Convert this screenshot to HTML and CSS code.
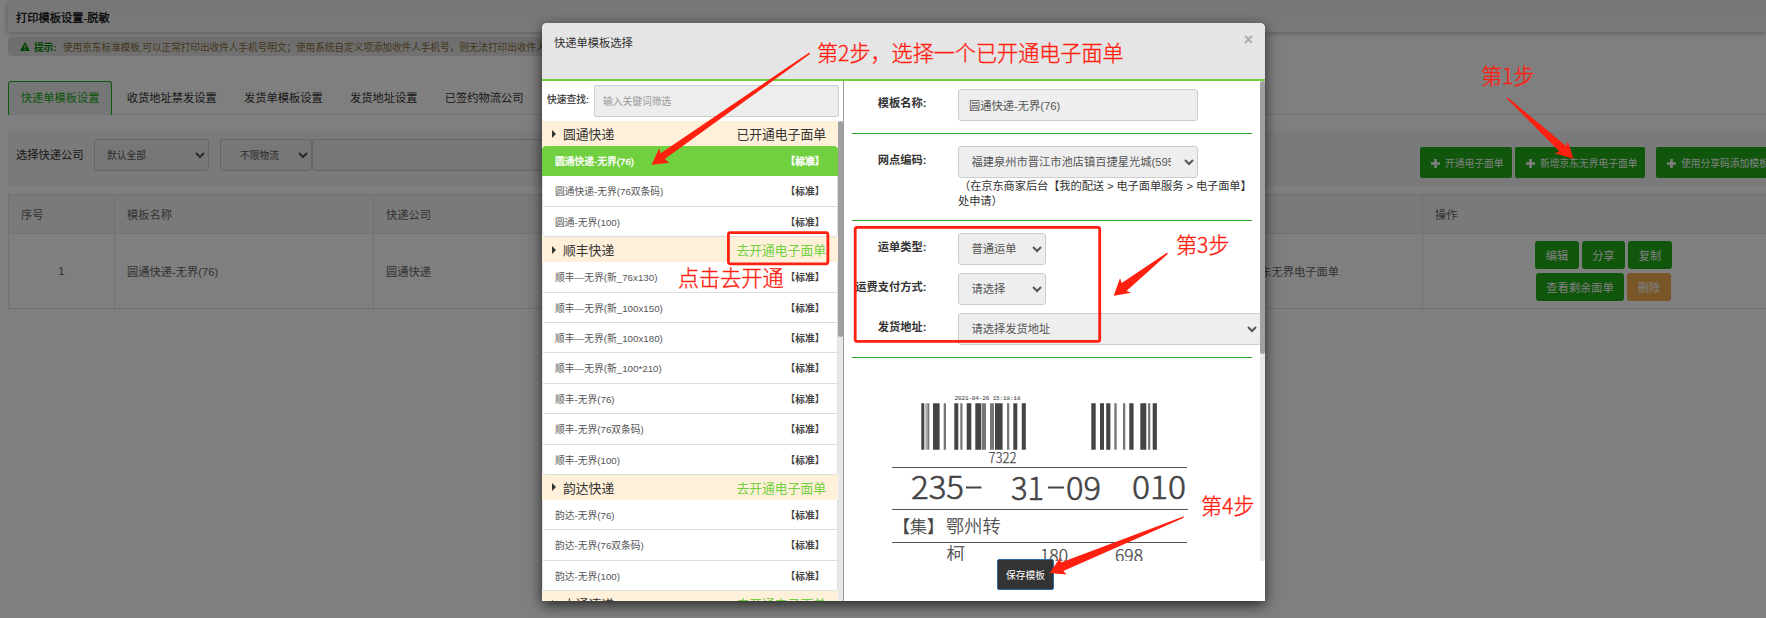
FILE: index.html
```html
<!DOCTYPE html>
<html lang="zh-CN">
<head>
    <meta charset="UTF-8">
    <title>打印模板设置</title>
    <link rel="stylesheet" href="styles.css">
</head>
<body>
    <div class="page">
        <div class="page-title">打印模板设置-脱敏</div>
        <div class="notice">
            <svg class="warn" viewBox="0 0 10 9"><path d="M5 0L10 9H0Z" fill="#080"/><path d="M4.4 3h1.2v3H4.4zM4.4 6.8h1.2v1.1H4.4z" fill="#ddd"/></svg>
            <b>提示:</b><span>使用京东标准模板,可以正常打印出收件人手机号明文；使用系统自定义项添加收件人手机号，则无法打印出收件人</span>
        </div>

        <div class="tabs">
            <div class="tab active">快递单模板设置</div>
            <div class="tab">收货地址禁发设置</div>
            <div class="tab">发货单模板设置</div>
            <div class="tab">发货地址设置</div>
            <div class="tab">已签约物流公司</div>
        </div>

        <div class="filter-bar">
            <span class="filter-label">选择快递公司</span>
            <select class="control company"><option>默认全部</option></select>
            <select class="control logistics"><option>不限物流</option></select>
            <input class="control keyword" type="text">
            <div class="actions">
                <button class="btn open"><svg viewBox="0 0 9 9"><path d="M3.2 0h2.6v3.2H9v2.6H5.8V9H3.2V5.8H0V3.2h3.2z"/></svg>开通电子面单</button>
                <button class="btn add"><svg viewBox="0 0 9 9"><path d="M3.2 0h2.6v3.2H9v2.6H5.8V9H3.2V5.8H0V3.2h3.2z"/></svg>新增京东无界电子面单</button>
                <button class="btn share"><svg viewBox="0 0 9 9"><path d="M3.2 0h2.6v3.2H9v2.6H5.8V9H3.2V5.8H0V3.2h3.2z"/></svg>使用分享码添加模板</button>
            </div>
        </div>

        <table class="templates">
            <colgroup><col class="c1"><col class="c2"><col class="c3"><col class="c4"><col class="c5"><col class="c6"></colgroup>
            <tr><th>序号</th><th>模板名称</th><th>快递公司</th><th></th><th></th><th>操作</th></tr>
            <tr>
                <td class="center">1</td>
                <td>圆通快递-无界(76)</td>
                <td>圆通快递</td>
                <td></td>
                <td>京东无界电子面单</td>
                <td class="ops">
                    <div><button class="op w44">编辑</button><button class="op w43">分享</button><button class="op w44">复制</button></div>
                    <div><button class="op w88">查看剩余面单</button><button class="op w44 del">删除</button></div>
                </td>
            </tr>
        </table>
    </div>

    <div class="backdrop"></div>

    <div class="modal">
        <div class="modal-header">
            <span>快递单模板选择</span>
            <span class="close">×</span>
        </div>
        <div class="modal-body">
            <div class="side">
                <div class="search">
                    <label>快速查找:</label>
                    <input type="text" placeholder="输入关键词筛选">
                </div>
                <div class="list-wrap">
                    <div class="list">
                        <div class="group"><i></i>圆通快递<span>已开通电子面单</span></div>
                        <div class="items">
                            <div class="item active">圆通快递-无界(76)<b>【标准】</b></div>
                            <div class="item">圆通快递-无界(76双条码)<b>【标准】</b></div>
                            <div class="item">圆通-无界(100)<b>【标准】</b></div>
                        </div>
                        <div class="group todo"><i></i>顺丰快递<span>去开通电子面单</span></div>
                        <div class="items">
                            <div class="item">顺丰—无界(新_76x130)<b>【标准】</b></div>
                            <div class="item">顺丰—无界(新_100x150)<b>【标准】</b></div>
                            <div class="item">顺丰—无界(新_100x180)<b>【标准】</b></div>
                            <div class="item">顺丰—无界(新_100*210)<b>【标准】</b></div>
                            <div class="item">顺丰-无界(76)<b>【标准】</b></div>
                            <div class="item">顺丰-无界(76双条码)<b>【标准】</b></div>
                            <div class="item">顺丰-无界(100)<b>【标准】</b></div>
                        </div>
                        <div class="group todo"><i></i>韵达快递<span>去开通电子面单</span></div>
                        <div class="items">
                            <div class="item">韵达-无界(76)<b>【标准】</b></div>
                            <div class="item">韵达-无界(76双条码)<b>【标准】</b></div>
                            <div class="item">韵达-无界(100)<b>【标准】</b></div>
                        </div>
                        <div class="group todo"><i></i>中通速递<span>去开通电子面单</span></div>
                    </div>
                    <div class="scrollbar"><div class="thumb side-thumb"></div></div>
                </div>
            </div>

            <div class="main">
                <div class="form-wrap">
                    <div class="form">
                        <div class="section s1">
                            <div class="field"><label>模板名称:</label><input class="control wide" type="text" value="圆通快递-无界(76)"></div>
                        </div>
                        <div class="section s2">
                            <div class="field">
                                <label>网点编码:</label>
                                <div>
                                    <select class="control wide"><option>福建泉州市晋江市池店镇百捷星光城(595001)</option></select>
                                    <p>（在京东商家后台【我的配送 &gt; 电子面单服务 &gt; 电子面单】<br>处申请）</p>
                                </div>
                            </div>
                        </div>
                        <div class="section s3">
                            <div class="field"><label>运单类型:</label><select class="control short"><option>普通运单</option></select></div>
                            <div class="field"><label>运费支付方式:</label><select class="control short"><option>请选择</option></select></div>
                            <div class="field"><label>发货地址:</label><select class="control full"><option>请选择发货地址</option></select></div>
                        </div>

                        <!-- waybill preview -->
                        <svg class="waybill" viewBox="892 385 300 190" width="300" height="190">
                            <text x="954.5" y="400.3" class="stamp" textLength="66">2021-04-26 15:18:18</text>
                            <g fill="#444">
                                <path d="M921.3 403.3h3v46.4h-3zM933 403.3h6.6v46.4H933zM954.3 403.3h4v46.4h-4zM966.7 403.3h4.6v46.4h-4.6zM975.3 403.3h6v46.4h-6zM995 403.3h7.6v46.4H995zM1013.3 403.3h4v46.4h-4zM1021.8 403.3h4v46.4h-4z"/>
                                <path d="M1091.3 403.3h4.4v46.4h-4.4zM1100 403.3h4v46.4h-4zM1106.2 403.3h4.2v46.4h-4.2zM1129.3 403.3h4.3v46.4h-4.3zM1140.3 403.3h6v46.4h-6zM1152.7 403.3h4.2v46.4h-4.2z"/>
                            </g>
                            <g fill="#777">
                                <path d="M925.6 403.3h1v46.4h-1zM927.3 403.3h2v46.4h-2zM943.7 403.3h2.3v46.4h-2.3zM960.3 403.3h2.2v46.4h-2.2zM982 403.3h4v46.4h-4zM990 403.3h4v46.4h-4zM1007 403.3h2.3v46.4h-2.3z"/>
                                <path d="M1114.3 403.3h2.4v46.4h-2.4zM1123 403.3h2.3v46.4H1123zM1148 403.3h2.3v46.4H1148z"/>
                            </g>
                            <text x="988.5" y="463.4" class="num" font-size="14.5" textLength="28" lengthAdjust="spacingAndGlyphs">7322</text>
                            <path d="M892 467.5h295M892 509.5h296M892 542.5h295" stroke="#555"/>
                            <g class="num big" font-size="32">
                                <text x="911" y="499.3" textLength="53" lengthAdjust="spacingAndGlyphs">235</text>
                                <text x="1011" y="499.8" textLength="33" lengthAdjust="spacingAndGlyphs">31</text>
                                <text x="1066" y="499.8" textLength="35" lengthAdjust="spacingAndGlyphs">09</text>
                                <text x="1132" y="499" textLength="54" lengthAdjust="spacingAndGlyphs">010</text>
                            </g>
                            <path d="M966 487.5h15.5M1048 487.5h16" stroke="#444" stroke-width="2"/>
                            <text x="893" y="532.5" class="num" font-size="17">【集】</text>
                            <text x="946" y="532.5" class="num" font-size="18.2">鄂州转</text>
                            <text x="946.5" y="560.5" class="num" font-size="18.5">柯</text>
                            <text x="1040" y="561.5" class="num" font-size="17" textLength="28" lengthAdjust="spacingAndGlyphs">180</text>
                            <text x="1115" y="561.5" class="num" font-size="17" textLength="28" lengthAdjust="spacingAndGlyphs">698</text>
                        </svg>
                    </div>
                    <div class="scrollbar"><div class="thumb main-thumb"></div></div>
                </div>
                <div class="modal-footer"><button class="save">保存模板</button></div>
            </div>
        </div>
    </div>

    <!-- step marks over the page -->
    <div class="marks">
        <svg viewBox="0 0 1766 618" width="1766" height="618">
            <g fill="#ff2010">
                <path d="M1506.7 98.5L1507.8 97.5L1566.3 146.3L1567.7 141L1573.3 158.7L1554.7 153.3L1559.3 151.3Z"/>
                <path d="M809.3 52.5L810 54L664.7 159L669.3 162.8L651.5 164.8L659.3 148.3L660.7 153.3Z"/>
                <path d="M1166.8 252.8L1167.9 253.8L1126.5 291L1131.3 292.7L1113.7 295.7L1120 278.3L1121.7 282.9Z"/>
                <path d="M1183.3 516.5L1183.8 517.8L1063.3 570.9L1066.7 574.5L1049.7 573L1060 557.7L1061 562.5Z"/>
            </g>
            <g fill="none" stroke="#ff2010" stroke-width="2.8">
                <rect x="728.4" y="232.6" width="99.5" height="31.2" rx="2"/>
                <rect x="855.2" y="227.4" width="244.5" height="114" rx="2"/>
            </g>
        </svg>
        <span class="mark m1">第1步</span>
        <span class="mark m2">第2步，选择一个已开通电子面单</span>
        <span class="mark m3">第3步</span>
        <span class="mark m4">第4步</span>
        <span class="mark m5">点击去开通</span>
    </div>
</body>
</html>
```
FILE: styles.css
```css
* {
    box-sizing: border-box;
}

body {
    margin: 0;
    width: 1766px;
    height: 618px;
    overflow: hidden;
    font-family: "Liberation Sans", "Noto Sans CJK SC", sans-serif;
    font-size: 11.25px;
    color: #333;
    background: #fff;
}

button, input, select {
    font-family: inherit;
    margin: 0;
}

.page {
    padding: 2px 0 0 8px;
    width: 1766px;
    height: 618px;
    overflow: hidden;
}

.page-title {
    height: 30px;
    padding: 0 8px;
    line-height: 32px;
    color: #111;
    -webkit-text-stroke: 0.3px #111;
    background: linear-gradient(#ececec, #f5f5f5);
    box-shadow: 0 1px 6px rgba(0, 0, 0, 0.3);
}

.notice {
    display: flex;
    align-items: center;
    height: 19px;
    margin-top: 5px;
    padding-left: 12px;
    border-radius: 4px;
    background: linear-gradient(#d9d9d9, #e4e4e4);
    font-size: 9.75px;
    letter-spacing: -0.15px;
    color: #8a6d3b;
    white-space: nowrap;
}

.notice b {
    width: 29px;
    color: #080;
}

/* the strip has no background behind the open dialog's right side */
.notice {
    width: 540px;
}

.warn {
    width: 10px;
    height: 9px;
    margin-right: 4px;
}

.tabs {
    display: flex;
    gap: 1.3px;
    height: 34px;
    margin-top: 25px;
    border-bottom: 1px solid #e4e4e4;
}

.tab {
    height: 34px;
    padding: 0 13px;
    line-height: 34px;
}

.tab.active {
    padding: 0 11.8px;
    line-height: 33px;
    border: 1px solid #20ac18;
    border-bottom: none;
    border-radius: 3px 3px 0 0;
    background: #ececec;
    color: #20ac18;
}

.filter-bar {
    display: flex;
    height: 55px;
    margin-top: 16px;
    padding: 8px 0 0 8px;
    background: #f4f4f4;
    font-size: 11.25px;
}

.filter-bar > * {
    flex: none;
}

.filter-label {
    width: 78px;
    line-height: 32px;
}

.control {
    height: 32px;
    border: 1px solid #ccc;
    border-radius: 3px;
    background-color: #eee;
    color: #555;
    font-size: 11.25px;
    padding: 0 10px;
    outline: none;
}

select.control {
    padding: 0 10px 0 8.5px;
}

.filter-bar .control {
    font-size: 9.75px;
}

.filter-bar .company {
    width: 115px;
    padding-left: 8px;
}

.filter-bar .logistics {
    width: 92px;
    margin-left: 11px;
    padding-left: 15px;
}

.filter-bar .keyword {
    width: 300px;
}

.actions {
    display: flex;
    margin: 8px 0 0 808px;
}

.btn {
    flex: none;
    height: 31px;
    padding: 0 0 0 11px;
    border: none;
    border-radius: 2px;
    background: #20ac18;
    color: #fff;
    font-size: 9.75px;
    text-align: left;
    white-space: nowrap;
}

.btn svg {
    width: 9px;
    height: 9px;
    margin-right: 5px;
    vertical-align: -1px;
    fill: #fff;
}

.open {
    width: 92px;
}

.add {
    width: 130px;
    margin-left: 3px;
}

.share {
    width: 130px;
    margin-left: 11px;
}

.templates {
    width: 1777px;
    margin-top: 8px;
    table-layout: fixed;
    border-collapse: collapse;
    color: #666;
}

.c1 { width: 106px; }
.c2 { width: 259px; }
.c3 { width: 156px; }
.c4 { width: 707px; }
.c5 { width: 186px; }

.templates th,
.templates td {
    padding: 0 12px;
    border: 1px solid #e4e4e4;
    text-align: left;
    font-weight: normal;
}

.templates th {
    height: 39px;
    background: #f4f4f4;
}

.templates td {
    height: 75px;
}

.templates .center {
    text-align: center;
}

.ops div {
    display: flex;
    justify-content: center;
    gap: 3px;
    margin-bottom: 4px;
}

.ops div + div {
    margin-bottom: 0;
}

.op {
    height: 28px;
    padding: 0;
    border: none;
    border-radius: 3px;
    background: #20ac18;
    color: #fff;
    font-size: 11.25px;
}

.w43 { width: 43px; }
.w44 { width: 44px; }
.w88 { width: 88px; }

.op.del {
    background: #f0ad4e;
}

.backdrop {
    position: absolute;
    inset: 0;
    background: rgba(0, 0, 0, 0.5);
}

/* Modal */
.modal {
    position: absolute;
    left: 542px;
    top: 23px;
    width: 723px;
    height: 578px;
    display: flex;
    flex-direction: column;
    background: #fff;
    border-radius: 5px 5px 0 0;
    box-shadow: 0 4px 14px rgba(0, 0, 0, 0.7);
    overflow: hidden;
}

.modal-header {
    display: flex;
    justify-content: space-between;
    height: 58px;
    padding: 12px 12px 0;
    line-height: 16px;
    background: #e5e5e5;
    border-bottom: 2px solid #71d040;
}

.close {
    margin-top: -3px;
    font-size: 16px;
    font-weight: bold;
    color: #aaa;
}

.modal-body {
    display: flex;
    height: 520px;
}

.side {
    width: 302px;
    border-right: 1px solid #999;
}

.search {
    display: flex;
    height: 40px;
    padding: 4px 4px 0 5px;
    font-size: 9.75px;
}

.search label {
    width: 47px;
    line-height: 29px;
    -webkit-text-stroke: 0.2px #333;
}

.search input {
    width: 245px;
    height: 32px;
    padding: 0 8px;
    border: 1px solid #ccc;
    border-radius: 2px;
    background: #ededed;
    font-size: 9.75px;
}

.search input::placeholder {
    color: #999;
}

.list-wrap,
.form-wrap {
    display: flex;
    height: 480px;
    overflow: hidden;
}

.list {
    width: 296px;
}

.scrollbar {
    width: 5px;
    background: #e8e8e8;
}

.thumb {
    border-radius: 3px;
    background: #a0a0a0;
}

.side-thumb {
    height: 216px;
}

.main-thumb {
    height: 273px;
}

.group {
    display: flex;
    align-items: center;
    height: 25px;
    padding: 0 12px 0 10px;
    background: #fff0da;
    font-size: 12.8px;
}

.group i {
    margin-right: 7px;
    border-left: 4px solid #333;
    border-top: 4px solid transparent;
    border-bottom: 4px solid transparent;
}

.group span {
    margin-left: auto;
}

.group.todo span {
    color: #71d040;
}

.item {
    display: flex;
    justify-content: space-between;
    height: 30.4px;
    padding: 0 12.5px 0 12px;
    line-height: 31.5px;
    border: 1px solid #ddd;
    border-top: none;
    font-size: 9.75px;
    color: #555;
}

.item:last-child {
    border-radius: 0 0 4px 4px;
}

.item b {
    color: #444;
}

.item.active {
    border-color: #71d040;
    border-radius: 4px 4px 0 0;
    background: #71d040;
    color: #fff;
    -webkit-text-stroke: 0.3px #fff;
}

.item.active b {
    color: #fff;
}

.form {
    width: 416px;
    padding: 0 8px;
    overflow: hidden;
}

.section {
    border-bottom: 1px solid #2aa420;
}

.s1 {
    height: 53px;
    padding-top: 8px;
}

.s2 {
    height: 87px;
    padding-top: 12px;
}

.s3 {
    height: 137px;
    padding-top: 12px;
}

.field {
    display: flex;
    height: 40px;
}

.field label {
    flex: none;
    display: flex;
    justify-content: flex-end;
    width: 74.5px;
    margin-right: 31.5px;
    line-height: 28px;
    font-weight: bold;
    white-space: nowrap;
}

.wide {
    width: 240px;
}

.short {
    width: 88px;
}

.full {
    flex: none;
    width: 303px;
}

.field p {
    margin: 0;
    line-height: 15px;
    padding-top: 1px;
    letter-spacing: -0.1px;
    text-indent: 1px;
    white-space: nowrap;
}

.waybill {
    display: block;
    margin: 27px 0 0 40px;
}

.num {
    fill: #444;
    stroke: #444;
    stroke-width: 0.25px;
    font-family: "Noto Sans CJK SC", sans-serif;
    font-weight: 300;
}

.big {
    stroke-width: 0.6px;
}

.stamp {
    fill: #333;
    font: 6px "Liberation Mono", monospace;
}

.modal-footer {
    height: 40px;
    padding-left: 153px;
}

.save {
    position: relative;
    top: -2px;
    width: 57px;
    height: 31px;
    padding: 0;
    border: 1px solid #2e6da4;
    border-radius: 2px;
    background: #333;
    color: #fff;
    font-size: 9.75px;
}

/* Step marks */
.marks {
    position: absolute;
    inset: 0;
}

.mark {
    position: absolute;
    color: #ff2010;
    font-size: 21.1px;
    line-height: 30px;
    white-space: nowrap;
    font-family: "Noto Sans CJK SC", sans-serif;
    font-weight: 300;
    -webkit-text-stroke: 0.35px #ff2010;
}

.m1 { left: 1481px; top: 60px; }
.m2 { left: 817px; top: 37px; }
.m3 { left: 1176px; top: 229px; }
.m4 { left: 1201px; top: 490px; }
.m5 { left: 678px; top: 262px; }
```
